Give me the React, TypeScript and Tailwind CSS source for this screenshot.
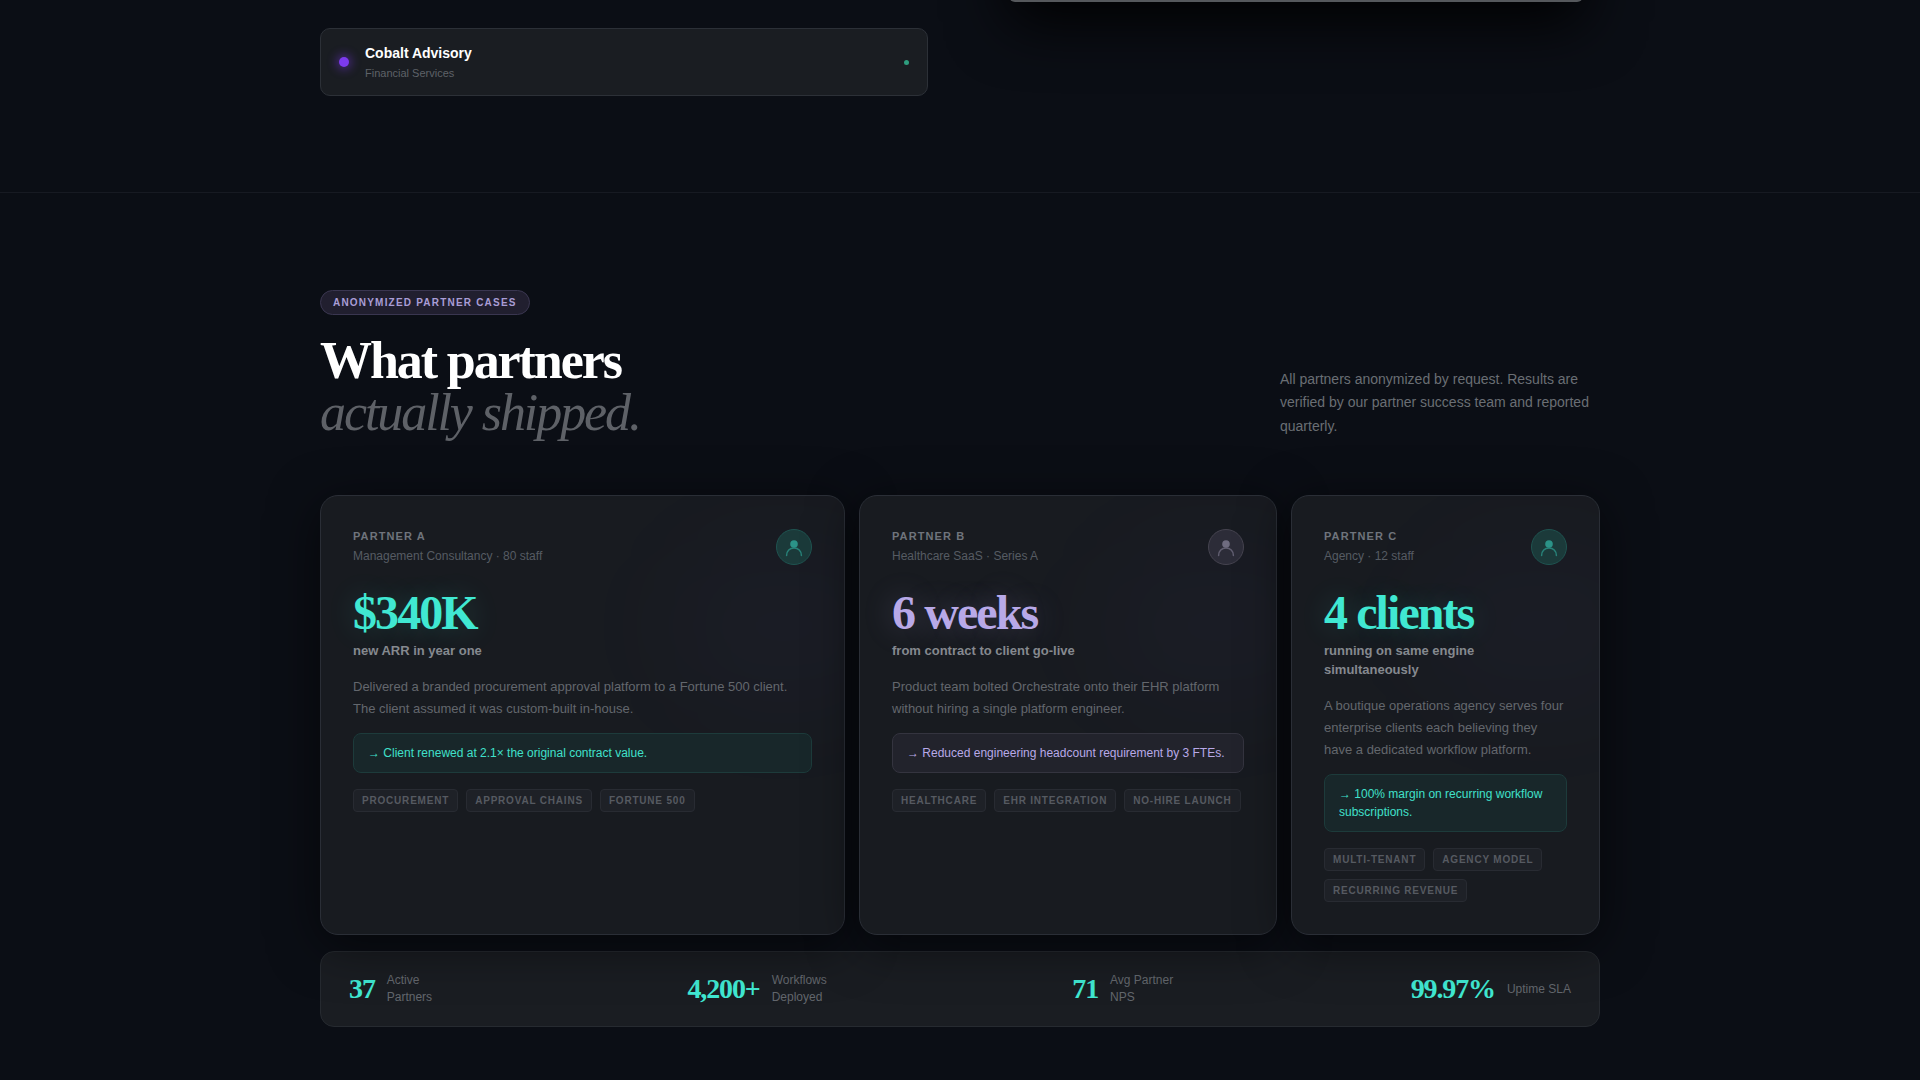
const cases = [
  {
    name: "PARTNER A",
    meta: "Management Consultancy · 80 staff",
    metric: "$340K",
    sub: "new ARR in year one",
    body: "Delivered a branded procurement approval platform to a Fortune 500 client. The client assumed it was custom-built in-house.",
    note: "Client renewed at 2.1× the original contract value.",
    tags: ["PROCUREMENT", "APPROVAL CHAINS", "FORTUNE 500"],
    violet: false,
  },
  {
    name: "PARTNER B",
    meta: "Healthcare SaaS · Series A",
    metric: "6 weeks",
    sub: "from contract to client go-live",
    body: "Product team bolted Orchestrate onto their EHR platform without hiring a single platform engineer.",
    note: "Reduced engineering headcount requirement by 3 FTEs.",
    tags: ["HEALTHCARE", "EHR INTEGRATION", "NO-HIRE LAUNCH"],
    violet: true,
  },
  {
    name: "PARTNER C",
    meta: "Agency · 12 staff",
    metric: "4 clients",
    sub: "running on same engine simultaneously",
    body: "A boutique operations agency serves four enterprise clients each believing they have a dedicated workflow platform.",
    note: "100% margin on recurring workflow subscriptions.",
    tags: ["MULTI-TENANT", "AGENCY MODEL", "RECURRING REVENUE"],
    violet: false,
  },
];

const stats = [
  { value: "37", label: ["Active", "Partners"], labelClass: "w-[64px]" },
  { value: "4,200+", label: ["Workflows", "Deployed"], labelClass: "w-[64px]" },
  { value: "71", label: ["Avg Partner", "NPS"], labelClass: "w-[64px]" },
  { value: "99.97%", label: ["Uptime SLA"], labelClass: "" },
];

const PersonIcon = () => (
  <svg viewBox="0 0 24 24" className="h-[24px] w-[24px]" fill="none">
    <circle cx="12" cy="9" r="3.8" fill="currentColor" />
    <path d="M4.6 20.5c0-4.6 3.2-7.5 7.4-7.5s7.4 2.9 7.4 7.5" stroke="currentColor" strokeWidth="1.5" strokeLinecap="round" opacity="0.8" />
  </svg>
);

const CaseCard = ({ item }: { item: (typeof cases)[number] }) => (
  <div className="relative overflow-hidden rounded-[18px] border border-[#2a2e36] bg-[#181b20] p-[32px] shadow-[0_10px_50px_rgba(0,0,0,0.55)]">
    {/* faint glow behind the figures */}
    <div className="pointer-events-none absolute right-[-60px] top-[40px] h-[180px] w-[240px] rounded-full bg-[#7c5cff]/[0.025] blur-[50px]" />
    <div className="relative">
      <div className="flex items-start justify-between">
        <div>
          <div className="text-[11px] font-bold leading-[16px] tracking-[0.1em] text-[#6f747c]">{item.name}</div>
          <div className="mt-[3px] text-[12px] leading-[18px] text-[#565b63]">{item.meta}</div>
        </div>
        <div
          className={
            item.violet
              ? "mt-[1px] flex h-[36px] w-[36px] items-center justify-center rounded-full border border-[#45434f] bg-[#2c2c38] text-[#6f6c80]"
              : "mt-[1px] flex h-[36px] w-[36px] items-center justify-center rounded-full border border-[#1f5350] bg-[#1b3a3a] text-[#2b9388]"
          }
        >
          <PersonIcon />
        </div>
      </div>
      <div
        className={
          item.violet
            ? "mt-[20px] font-['Liberation_Serif',serif] text-[48px] font-bold leading-[56px] tracking-[-0.04em] text-[#b8a9e8] [text-shadow:0_0_30px_rgba(184,169,232,0.25)]"
            : "mt-[20px] font-['Liberation_Serif',serif] text-[48px] font-bold leading-[56px] tracking-[-0.04em] text-[#40e8d2] [text-shadow:0_0_30px_rgba(64,232,210,0.2)]"
        }
      >
        {item.metric}
      </div>
      <div className="text-[13px] font-bold leading-[19px] text-[#85898f]">{item.sub}</div>
      <p className="mt-[16px] text-[13px] leading-[22.1px] text-[#63676d]">{item.body}</p>
      <div
        className={
          item.violet
            ? "mt-[13px] rounded-[8px] border border-[#34343f] bg-[#22232c] px-[14px] py-[10px] text-[12px] leading-[18px] text-[#b8a9e8]"
            : "mt-[13px] rounded-[8px] border border-[#1d3b3b] bg-[#18272a] px-[14px] py-[10px] text-[12px] leading-[18px] text-[#40e0cb]"
        }
      >
        → {item.note}
      </div>
      <div className="mt-[16px] flex flex-wrap gap-x-[8px] gap-y-[8px]">
        {item.tags.map((tag) => (
          <span
            key={tag}
            className="rounded-[4px] border border-[#282b32] bg-[#1e2127] px-[8px] py-[4px] text-[10px] font-bold leading-[13px] tracking-[0.08em] text-[#565a61]"
          >
            {tag}
          </span>
        ))}
      </div>
    </div>
  </div>
);

export default function App() {
  return (
    <div className="min-h-[1080px] overflow-hidden bg-[#0b0e15] font-['Liberation_Sans',Arial,sans-serif]">
      {/* tail of the section above */}
      <div className="h-[193px] border-b border-[#171a22]">
        <div className="mx-auto flex w-[1280px] items-start">
          <div className="mt-[28px] flex h-[68px] w-[608px] items-center rounded-[10px] border border-[#2c3037] bg-[#1a1d22] px-[18px]">
            <span className="h-[10px] w-[10px] rounded-full bg-[#7c3aed] shadow-[0_0_10px_3px_rgba(124,58,237,0.4)]" />
            <div className="ml-[16px] flex-1">
              <div className="text-[14px] font-bold leading-[20px] text-white">Cobalt Advisory</div>
              <div className="mt-[2px] text-[11px] leading-[16px] text-[#5e6268]">Financial Services</div>
            </div>
            <span className="h-[5px] w-[5px] rounded-full bg-[#2e9d7e]" />
          </div>
          <div className="-mt-[398px] ml-[81px] h-[400px] w-[574px] rounded-b-[6px] border-b-2 border-[#55585c] bg-[#101216] shadow-[0_20px_60px_rgba(0,0,0,0.95)]" />
        </div>
      </div>

      <section className="mx-auto w-[1280px] pt-[96px]">
        <span className="inline-block rounded-full border border-[#3a3650] bg-[#211f2f] px-[12px] py-[5px] text-[10px] font-bold leading-[13px] tracking-[0.12em] text-[#a99dd6]">
          ANONYMIZED PARTNER CASES
        </span>
        <div className="mt-[20px] flex items-end justify-between">
          <h2 className="font-['Liberation_Serif',serif] text-[52px] leading-[52px] tracking-[-0.04em]">
            <span className="block font-bold text-white">What partners</span>
            <span className="block italic text-[#5e6167]">actually shipped.</span>
          </h2>
          <p className="w-[320px] text-[14px] leading-[23.8px] text-[#6a6e74]">
            All partners anonymized by request. Results are verified by our partner success team and reported quarterly.
          </p>
        </div>

        <div className="mt-[56px] grid h-[440px] grid-cols-[525px_418px_309px] gap-[14px]">
          {cases.map((item) => (
            <CaseCard key={item.name} item={item} />
          ))}
        </div>

        <div className="mt-[16px] flex h-[76px] items-center justify-between rounded-[14px] border border-[#262a30] bg-[#1a1d22] px-[28px]">
          {stats.map((s) => (
            <div key={s.value} className="flex items-center gap-[12px]">
              <span className="font-['Liberation_Serif',serif] text-[28px] font-bold tracking-[-0.04em] text-[#40e8d2]">{s.value}</span>
              <span className={`${s.labelClass} text-[12px] leading-[17px] text-[#63676d]`}>
                {s.label.map((line) => (
                  <span key={line} className="block whitespace-nowrap">{line}</span>
                ))}
              </span>
            </div>
          ))}
        </div>
      </section>
    </div>
  );
}
